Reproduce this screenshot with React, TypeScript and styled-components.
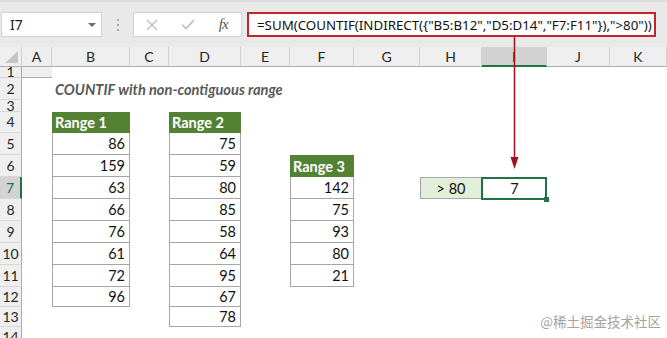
import React from 'react'
import styled, { createGlobalStyle } from 'styled-components'

const GlobalStyle = createGlobalStyle`
  html, body { margin: 0; padding: 0; background: #fff; }
  body { font-family: Lato, "Liberation Sans", sans-serif; overflow: hidden; }
`

const COL_WIDTHS = [22, 30, 78, 39, 72, 49, 64, 66, 62, 65, 63]
const ROW_HEIGHTS = [11, 22, 12, 21, 22, 22, 22, 22, 22, 22, 22, 20, 20, 20]
const LETTERS = ['A', 'B', 'C', 'D', 'E', 'F', 'G', 'H', 'I', 'J', 'K']

const ACTIVE_COL = 'I'
const ACTIVE_ROW = 7

const ranges = [
  { col: 2, startRow: 4, title: 'Range 1', values: [86, 159, 63, 66, 76, 61, 72, 96] },
  { col: 4, startRow: 4, title: 'Range 2', values: [75, 59, 80, 85, 58, 64, 95, 67, 78] },
  { col: 6, startRow: 6, title: 'Range 3', values: [142, 75, 93, 80, 21] },
]

const FORMULA = '=SUM(COUNTIF(INDIRECT({"B5:B12","D5:D14","F7:F11"}),">80"))'

const Page = styled.div`
  position: relative;
  width: 667px;
  height: 338px;
  overflow: hidden;
`

// ---- formula bar ----
const Toolbar = styled.div`
  display: flex;
  align-items: center;
  height: 47px;
  background: #e9e9e9;
  box-sizing: border-box;
  border-top: 2px solid #dcdcdc;
  padding-left: 1px;
`

const NameBox = styled.div`
  display: flex;
  align-items: center;
  justify-content: space-between;
  width: 101px;
  height: 25px;
  box-sizing: border-box;
  background: #fff;
  border: 1px solid #d3d3d3;
  padding: 0 5px 0 8px;
  font-family: "Noto Sans", "Open Sans", sans-serif;
  font-size: 14px;
  color: #222;
`

const Caret = styled.span`
  width: 0;
  height: 0;
  border-left: 4px solid transparent;
  border-right: 4px solid transparent;
  border-top: 4px solid #6b6b6b;
`

const Dots = styled.div`
  width: 31px;
  display: flex;
  flex-direction: column;
  align-items: center;
  gap: 3px;

  span {
    width: 2px;
    height: 2px;
    background: #a8a8a8;
  }
`

const ButtonBox = styled.div`
  display: flex;
  width: 109px;
  height: 25px;
  box-sizing: border-box;
  background: #fff;
  border: 1px solid #d3d3d3;
`

const BarButton = styled.div`
  flex: 1;
  display: flex;
  align-items: center;
  justify-content: center;
`

const Fx = styled.span`
  font-family: "Liberation Serif", serif;
  font-style: italic;
  font-size: 15px;
  color: #555;
  letter-spacing: -1px;
`

const FormulaBox = styled.div`
  display: flex;
  align-items: center;
  margin-left: 5px;
  width: 409px;
  height: 25px;
  box-sizing: border-box;
  background: #fff;
  border: 2px solid #c0252b;
  padding-left: 8px;
  font-family: "Noto Sans", "Open Sans", sans-serif;
  font-size: 13.3px;
  color: #111;
  white-space: nowrap;
  overflow: hidden;
`

// ---- sheet ----
const Sheet = styled.div`
  display: grid;
  grid-template-columns: ${COL_WIDTHS.map((w) => w + 'px').join(' ')} 1fr;
  grid-template-rows: 20px ${ROW_HEIGHTS.map((h) => h + 'px').join(' ')};
  font-size: 14.5px;
  color: #111;
`

const Corner = styled.div`
  position: relative;
  background: #efefef;
  border-right: 1px solid #d0d0d0;
  border-bottom: 1px solid #ababab;
  box-sizing: border-box;

  &::after {
    content: '';
    position: absolute;
    right: 3px;
    bottom: 3px;
    border-left: 13px solid transparent;
    border-bottom: 12px solid #c4c4c4;
  }
`

const ColHeader = styled.div<{ $active?: boolean }>`
  display: flex;
  align-items: center;
  justify-content: center;
  box-sizing: border-box;
  background: ${(p) => (p.$active ? '#d3d3d3' : '#efefef')};
  border-right: 1px solid #d0d0d0;
  border-bottom: ${(p) => (p.$active ? '2px solid #217346' : '1px solid #ababab')};
  color: #262626;
  font-size: 14px;
`

const ColHeaderFill = styled.div`
  background: #efefef;
  border-bottom: 1px solid #ababab;
  box-sizing: border-box;
`

const RowHeader = styled.div<{ $row: number; $active?: boolean }>`
  grid-column: 1;
  grid-row: ${(p) => p.$row + 1};
  display: flex;
  align-items: center;
  justify-content: center;
  box-sizing: border-box;
  background: ${(p) => (p.$active ? '#d3d3d3' : '#efefef')};
  border-right: ${(p) => (p.$active ? '2px solid #217346' : '1px solid #ababab')};
  border-bottom: 1px solid #d6d6d6;
  color: ${(p) => (p.$active ? '#217346' : '#262626')};
  font-size: 14px;
  line-height: 1;
`

const Title = styled.div`
  grid-column: 3 / 10;
  grid-row: 3;
  display: flex;
  align-items: center;
  padding-left: 3px;
  font-style: italic;
  font-weight: 700;
  color: #595959;
  font-size: 14.6px;
`

const RangeHead = styled.div<{ $col: number; $row: number }>`
  grid-column: ${(p) => p.$col + 1};
  grid-row: ${(p) => p.$row + 1};
  display: flex;
  align-items: center;
  padding-left: 3px;
  background: #548235;
  color: #fff;
  font-weight: 700;
  font-size: 14.5px;
`

const NumCell = styled.div<{ $col: number; $row: number }>`
  grid-column: ${(p) => p.$col + 1};
  grid-row: ${(p) => p.$row + 1};
  display: flex;
  align-items: center;
  justify-content: flex-end;
  padding-right: 4px;
  box-sizing: border-box;
  border: 1px solid #a6a6a6;
  border-top: none;
`

const CriteriaCell = styled.div`
  grid-column: 9;
  grid-row: ${ACTIVE_ROW + 1};
  display: flex;
  align-items: center;
  justify-content: center;
  box-sizing: border-box;
  background: #e2efda;
  border: 1px solid #a6a6a6;
`

const ResultCell = styled.div`
  grid-column: 10;
  grid-row: ${ACTIVE_ROW + 1};
  position: relative;
  display: flex;
  align-items: center;
  justify-content: center;

  &::after {
    content: '';
    position: absolute;
    inset: 0 0 -1px -1px;
    border: 2px solid #217346;
  }
`

const FillHandle = styled.span`
  position: absolute;
  right: -2px;
  bottom: -3px;
  width: 5px;
  height: 5px;
  background: #217346;
  z-index: 1;
`

const Arrow = styled.svg`
  position: absolute;
  left: 0;
  top: 0;
  pointer-events: none;
`

const Watermark = styled.div`
  position: absolute;
  right: 6px;
  bottom: 7px;
  font-family: "Noto Sans CJK SC", sans-serif;
  font-size: 13.5px;
  color: #a3a3a3;
`

const App: React.FC = () => {
  return (
    <Page>
      <GlobalStyle />
      <Toolbar>
        <NameBox>
          <span>I7</span>
          <Caret />
        </NameBox>
        <Dots>
          <span />
          <span />
          <span />
        </Dots>
        <ButtonBox>
          <BarButton>
            <svg width="12" height="12" viewBox="0 0 12 12">
              <path d="M1 1 L11 11 M11 1 L1 11" stroke="#bdbdbd" strokeWidth="1.4" fill="none" />
            </svg>
          </BarButton>
          <BarButton>
            <svg width="14" height="11" viewBox="0 0 14 11">
              <path d="M1 5.5 L5 9.5 L13 1" stroke="#bdbdbd" strokeWidth="1.6" fill="none" />
            </svg>
          </BarButton>
          <BarButton>
            <Fx>fx</Fx>
          </BarButton>
        </ButtonBox>
        <FormulaBox>{FORMULA}</FormulaBox>
      </Toolbar>

      <Sheet>
        <Corner />
        {LETTERS.map((l) => (
          <ColHeader key={l} $active={l === ACTIVE_COL}>
            {l}
          </ColHeader>
        ))}
        <ColHeaderFill />

        {ROW_HEIGHTS.map((_, i) => (
          <RowHeader key={i} $row={i + 1} $active={i + 1 === ACTIVE_ROW}>
            {i + 1}
          </RowHeader>
        ))}

        <Title>COUNTIF with non-contiguous range</Title>

        {ranges.map((r) => (
          <React.Fragment key={r.title}>
            <RangeHead $col={r.col} $row={r.startRow}>
              {r.title}
            </RangeHead>
            {r.values.map((v, i) => (
              <NumCell key={i} $col={r.col} $row={r.startRow + 1 + i}>
                {v}
              </NumCell>
            ))}
          </React.Fragment>
        ))}

        <CriteriaCell>&gt; 80</CriteriaCell>
        <ResultCell>
          7
          <FillHandle />
        </ResultCell>
      </Sheet>

      <Arrow width="667" height="338">
        <line x1="514.5" y1="37" x2="514.5" y2="160" stroke="#a0101e" strokeWidth="1.5" />
        <polygon points="510.5,157 518.5,157 514.5,169" fill="#a0101e" />
      </Arrow>

      <Watermark>@稀土掘金技术社区</Watermark>
    </Page>
  )
}

export default App
